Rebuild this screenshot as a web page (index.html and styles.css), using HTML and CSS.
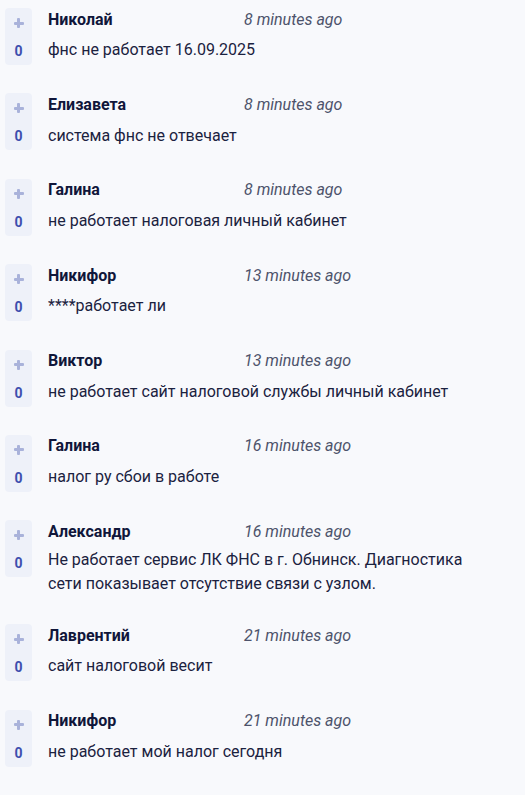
FILE: index.html
```html
<!DOCTYPE html>
<html lang="ru">
<head>
<meta charset="utf-8">
<link rel="stylesheet" href="styles.css">
</head>
<body>
<div class="list">
  <div class="item">
    <div class="vote"><span class="plus"></span><span class="count">0</span></div>
    <div class="body">
      <div class="head"><span class="name">Николай</span><span class="time">8 minutes ago</span></div>
      <div class="msg"><p>фнс не работает 16.09.2025</p></div>
    </div>
  </div>
  <div class="item">
    <div class="vote"><span class="plus"></span><span class="count">0</span></div>
    <div class="body">
      <div class="head"><span class="name">Елизавета</span><span class="time">8 minutes ago</span></div>
      <div class="msg"><p>система фнс не отвечает</p></div>
    </div>
  </div>
  <div class="item">
    <div class="vote"><span class="plus"></span><span class="count">0</span></div>
    <div class="body">
      <div class="head"><span class="name">Галина</span><span class="time">8 minutes ago</span></div>
      <div class="msg"><p>не работает налоговая личный кабинет</p></div>
    </div>
  </div>
  <div class="item">
    <div class="vote"><span class="plus"></span><span class="count">0</span></div>
    <div class="body">
      <div class="head"><span class="name">Никифор</span><span class="time">13 minutes ago</span></div>
      <div class="msg"><p>****работает ли</p></div>
    </div>
  </div>
  <div class="item">
    <div class="vote"><span class="plus"></span><span class="count">0</span></div>
    <div class="body">
      <div class="head"><span class="name">Виктор</span><span class="time">13 minutes ago</span></div>
      <div class="msg"><p>не работает сайт налоговой службы личный кабинет</p></div>
    </div>
  </div>
  <div class="item">
    <div class="vote"><span class="plus"></span><span class="count">0</span></div>
    <div class="body">
      <div class="head"><span class="name">Галина</span><span class="time">16 minutes ago</span></div>
      <div class="msg"><p>налог ру сбои в работе</p></div>
    </div>
  </div>
  <div class="item">
    <div class="vote"><span class="plus"></span><span class="count">0</span></div>
    <div class="body">
      <div class="head"><span class="name">Александр</span><span class="time">16 minutes ago</span></div>
      <div class="msg"><p>Не работает сервис ЛК ФНС в г. Обнинск. Диагностика сети показывает отсутствие связи с узлом.</p></div>
    </div>
  </div>
  <div class="item">
    <div class="vote"><span class="plus"></span><span class="count">0</span></div>
    <div class="body">
      <div class="head"><span class="name">Лаврентий</span><span class="time">21 minutes ago</span></div>
      <div class="msg"><p>сайт налоговой весит</p></div>
    </div>
  </div>
  <div class="item">
    <div class="vote"><span class="plus"></span><span class="count">0</span></div>
    <div class="body">
      <div class="head"><span class="name">Никифор</span><span class="time">21 minutes ago</span></div>
      <div class="msg"><p>не работает мой налог сегодня</p></div>
    </div>
  </div>
  <div class="item">
    <div class="vote"></div>
  </div>
</div>
</body>
</html>
```

FILE: styles.css
```css
html, body {
  margin: 0;
  padding: 0;
  background: #f8f9fc;
}
body {
  font-family: Roboto, "Noto Sans", sans-serif;
  color: #1b2240;
}
.list {
  display: flex;
  flex-direction: column;
  gap: 28.4px;
  padding: 8px 0 0 5px;
  height: 795px;
  overflow: hidden;
  box-sizing: border-box;
}
.item {
  display: flex;
  align-items: stretch;
  gap: 16px;
  flex-shrink: 0;
}
.vote {
  width: 27px;
  height: 57px;
  flex-shrink: 0;
  background: #eef1f9;
  border-radius: 4px;
  display: flex;
  flex-direction: column;
  align-items: center;
  padding-top: 10px;
  box-sizing: border-box;
}
.plus {
  position: relative;
  width: 10px;
  height: 10px;
  display: block;
}
.plus::before, .plus::after {
  content: "";
  position: absolute;
  background: #a9b2da;
  border-radius: 1px;
}
.plus::before {
  left: 0;
  top: 3.5px;
  width: 10px;
  height: 3px;
}
.plus::after {
  left: 3.5px;
  top: 0;
  width: 3px;
  height: 10px;
}
.count {
  margin-top: 15px;
  font-size: 14px;
  font-weight: 700;
  color: #3e4fae;
  line-height: 16px;
}
.body {
  width: 440px;
  min-height: 57px;
  display: flex;
  flex-direction: column;
}
.head {
  display: flex;
  align-items: baseline;
  height: 22px;
  padding-top: 0.5px;
  margin-bottom: 5px;
}
.name {
  width: 196px;
  font-size: 16px;
  font-weight: 700;
  color: #10163a;
  line-height: 22px;
}
.time {
  font-size: 16px;
  font-style: italic;
  color: #4d536b;
  line-height: 22px;
}
.msg {
  flex-grow: 1;
  display: flex;
  align-items: center;
}
.msg p {
  margin: 0;
  font-size: 16px;
  line-height: 24px;
  color: #1b2240;
}
```
